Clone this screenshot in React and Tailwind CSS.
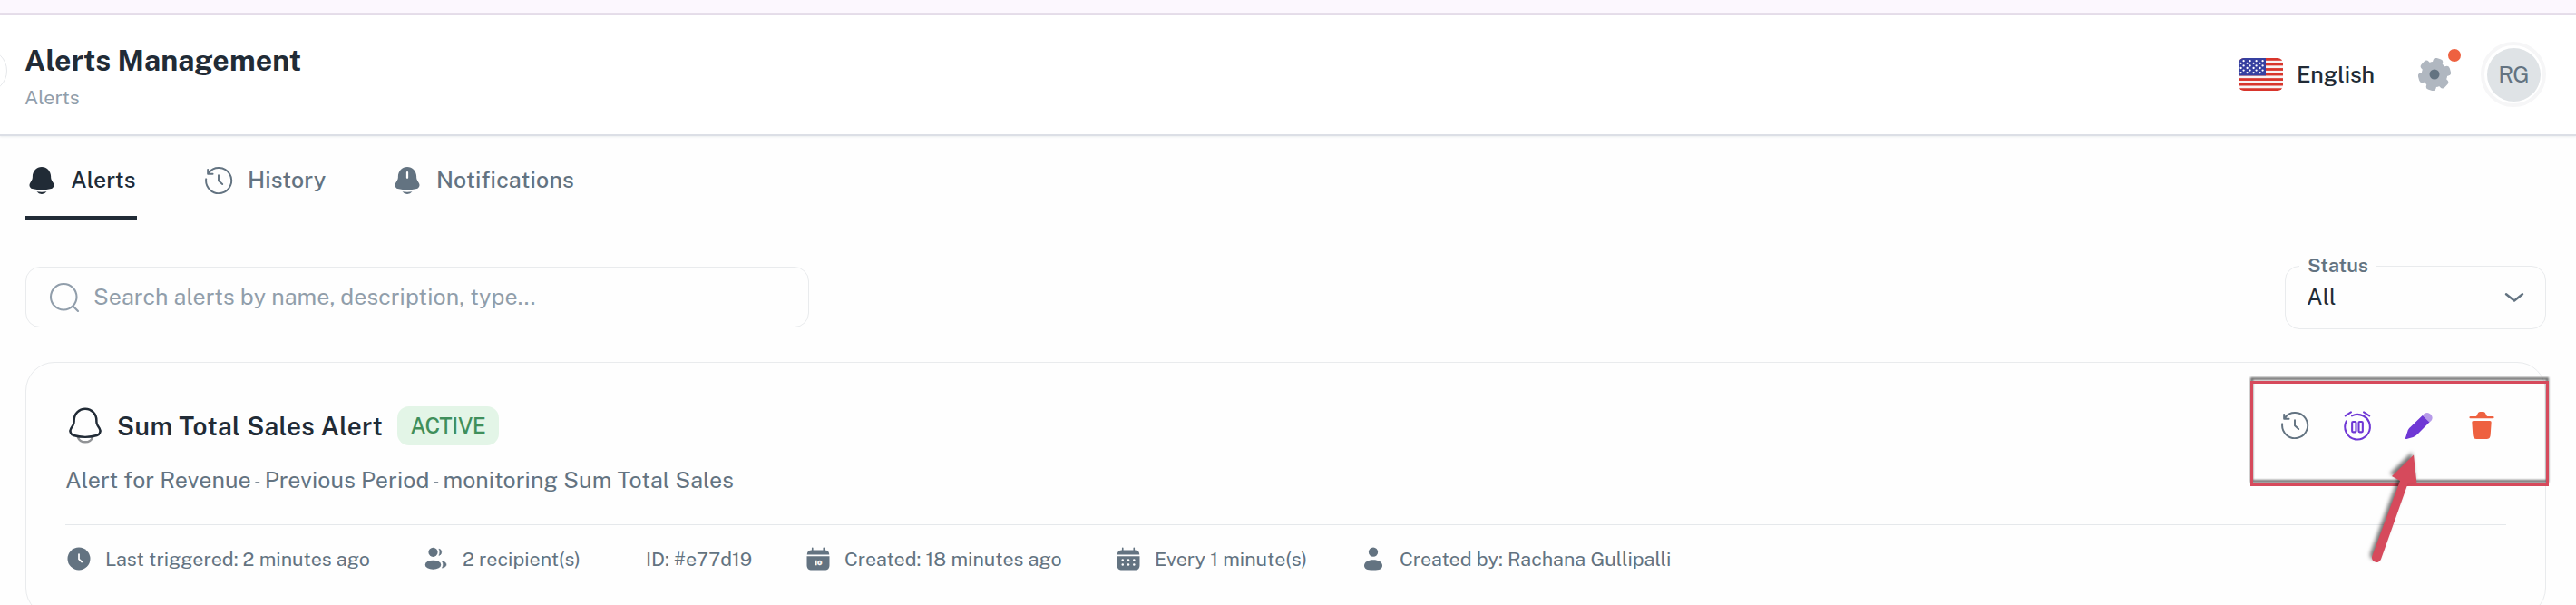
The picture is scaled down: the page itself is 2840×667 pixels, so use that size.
import { clsx } from 'clsx';

function BellIcon({ alert = false }) {
  return (
    <svg viewBox="0 0 24 24" className="size-9 shrink-0" fill="currentColor">
      <path d="M18.75 9v.704c0 .845.24 1.671.692 2.374l1.108 1.723c1.011 1.574.239 3.713-1.52 4.21a25.8 25.8 0 0 1-14.06 0c-1.759-.497-2.531-2.636-1.52-4.21l1.108-1.723a4.4 4.4 0 0 0 .693-2.374V9c0-3.866 3.022-7 6.749-7s6.75 3.134 6.75 7" />
      <path d="M8.352 20.242A4.63 4.63 0 0 0 12 22a4.63 4.63 0 0 0 3.648-1.758a27.2 27.2 0 0 1-7.296 0" />
      {alert && <path d="M12 6v3.9" stroke="#fff" strokeWidth="1.5" strokeLinecap="round" />}
    </svg>
  );
}

function BellOutlineIcon() {
  return (
    <svg viewBox="0 0 24 24" className="size-11 shrink-0" fill="none" stroke="currentColor" strokeWidth="1.35">
      <path d="M7.5 19c.655 1.748 2.422 3 4.5 3s3.845-1.252 4.5-3" stroke="#919396" />
      <path d="M18.75 9.71v-.705C18.75 5.136 15.726 2 12 2S5.25 5.136 5.25 9.005v.705a4.4 4.4 0 0 1-.692 2.375L3.45 13.81c-1.011 1.575-.239 3.716 1.52 4.214a25.8 25.8 0 0 0 14.06 0c1.759-.498 2.531-2.639 1.52-4.213l-1.108-1.725a4.4 4.4 0 0 1-.693-2.375Z" />
    </svg>
  );
}

function HistoryIcon() {
  return (
    <svg viewBox="0 0 24 24" className="size-9 shrink-0" fill="none" stroke="currentColor" strokeWidth="1.3" strokeLinecap="round" strokeLinejoin="round">
      <path d="M4.7 6.3A9.35 9.35 0 1 1 2.8 10.9" />
      <path d="M4.1 3.9v3.2h3.6M4.3 6.9l1.3-1.3" />
      <path d="M12 8.2v4l2.8 2.5" />
    </svg>
  );
}

function PauseAlarmIcon() {
  return (
    <svg viewBox="0 0 24 24" className="size-9 shrink-0" fill="none" stroke="currentColor" strokeWidth="1.4" strokeLinecap="round">
      <path d="M8 4.9A9.2 9.2 0 1 1 3.9 8.9" />
      <path d="M3.2 4.9l4.1-2.6M16.7 2.3l4.1 2.6" />
      <rect x="8.1" y="9.3" width="2.9" height="7.6" rx="0.7" />
      <rect x="13" y="9.3" width="2.9" height="7.6" rx="0.7" />
    </svg>
  );
}

function PencilIcon() {
  return (
    <svg viewBox="0 0 24 24" className="size-9 shrink-0">
      <path fill="#b79be9" d="M14.5 4.7 15.8 3.4a3.7 3.7 0 0 1 5.2 5.1L19.5 9.9Z" />
      <path fill="currentColor" d="M14.5 4.7 19.6 9.7 11.2 18.2C9.8 19.6 9 20.1 7.6 20.6L2.8 22c-.6.1-1-.2-.8-.8L3.5 16.5c.4-1.3.9-2.1 2-3.1Z" />
    </svg>
  );
}

function TrashIcon() {
  return (
    <svg viewBox="0 0 24 24" className="size-9 shrink-0" fill="currentColor">
      <path d="M3.7 5.4h3.6c.6 0 1-.3 1.3-.9C9.1 3 9.6 2 11 2h2c1.4 0 1.9 1 2.4 2.5.3.6.7.9 1.3.9h3.6c1 0 1 1.5 0 1.5H3.7c-1 0-1-1.5 0-1.5Z" />
      <path d="M6 8.7h12c.8 0 1.2.5 1.1 1.300l-.6 8.600c-.2 2.400-.9 3.400-3.400 3.400H8.900c-2.500 0-3.200-1-3.400-3.400L4.900 10c-.1-.8.3-1.300 1.100-1.300Z" />
    </svg>
  );
}

function SearchIcon() {
  return (
    <svg viewBox="0 0 24 24" className="size-9 shrink-0" fill="none" stroke="currentColor" strokeWidth="1.4" strokeLinecap="round">
      <circle cx="11.5" cy="11.5" r="9.5" />
      <path d="M18.5 18.5 22 22" />
    </svg>
  );
}

function GearIcon() {
  return (
    <svg viewBox="-18 -18 36 36" className="size-9 shrink-0">
      <g fill="#b0b7c0" transform="rotate(15)">
        <circle r="14.2" />
        <rect x="-5.5" y="-18" width="11" height="36" rx="3.5" />
        <rect x="-5.5" y="-18" width="11" height="36" rx="3.5" transform="rotate(60)" />
        <rect x="-5.5" y="-18" width="11" height="36" rx="3.5" transform="rotate(120)" />
      </g>
      <circle r="5.5" fill="#637381" />
    </svg>
  );
}

const STAR_ROWS = [0, 1, 2, 3, 4, 5];

function FlagIcon() {
  return (
    <svg viewBox="0 0 49 36" className="h-9 w-[49px] shrink-0 rounded-md">
      <rect width="49" height="36" fill="#f7f3f3" />
      {[0, 1, 2, 3, 4, 5, 6].map((i) => (
        <rect key={i} y={i * 5.54} width="49" height="2.8" fill="#d8352c" />
      ))}
      <rect width="30" height="19.4" fill="#3640a0" />
      {STAR_ROWS.map((row) =>
        [0, 1, 2, 3].map((col) => (
          <circle
            key={`${row}-${col}`}
            cx={(row % 2 ? 2.6 : 5.6) + col * 7}
            cy={3.2 + row * 2.6}
            r="1.15"
            fill="#fff"
          />
        ))
      )}
    </svg>
  );
}

function ClockIcon() {
  return (
    <svg viewBox="0 0 24 24" className="size-[30px] shrink-0">
      <circle cx="12" cy="12" r="10" fill="currentColor" />
      <path d="M12 8v4.3l2.6 2.5" fill="none" stroke="#fff" strokeWidth="1.4" strokeLinecap="round" />
    </svg>
  );
}

function UsersIcon() {
  return (
    <svg viewBox="0 0 24 24" className="size-[30px] shrink-0" fill="currentColor">
      <circle cx="9.2" cy="6.2" r="4.1" />
      <ellipse cx="9.2" cy="17.3" rx="7" ry="4" />
      <path d="M14.3 3.2a3.1 3.1 0 0 1 0 6c1-1.9 1-4.1 0-6Z" stroke="currentColor" strokeWidth=".4" />
      <path d="M17.1 14.2c5 .6 5 5.3 0 5.9 1.2-1.8 1.2-4.1 0-5.9Z" stroke="currentColor" strokeWidth=".4" />
    </svg>
  );
}

function CalendarIcon({ date = false }) {
  return (
    <svg viewBox="0 0 24 24" className="size-[30px] shrink-0" fill="currentColor">
      <path d="M7 2.6v3M17 2.6v3" stroke="currentColor" strokeWidth="1.3" strokeLinecap="round" />
      <path d="M2.2 8.3C2.4 5.2 4 4.3 7 4.3h10c3 0 4.6.9 4.8 4Z" />
      <path d="M2 9.7h20v7.5c0 3.5-1.3 4.8-4.5 4.8h-11C3.3 22 2 20.7 2 17.2Z" />
      {date ? (
        <text x="12" y="17.9" fill="#fff" stroke="#fff" strokeWidth=".3" fontSize="6.4" fontWeight="800" textAnchor="middle">10</text>
      ) : (
        [13.2, 17.2].map((cy) =>
          [7, 12, 17].map((cx) => <circle key={`${cx}-${cy}`} cx={cx} cy={cy} r="1" fill="#fff" />)
        )
      )}
    </svg>
  );
}

function UserIcon() {
  return (
    <svg viewBox="0 0 24 24" className="size-[30px] shrink-0" fill="currentColor">
      <circle cx="12" cy="6.1" r="4.1" />
      <path d="M12 13c4.600 0 8 2 8 5s-2.300 4-8 4-8-1-8-4 3.400-5 8-5Z" />
    </svg>
  );
}

const tabs = [
  { label: 'Alerts', icon: <BellIcon />, active: true, width: 'w-[73px]' },
  { label: 'History', icon: <HistoryIcon />, width: 'w-[86px] tracking-[0.1px]' },
  { label: 'Notifications', icon: <BellIcon alert />, width: 'w-[153px] tracking-[0.2px]' }
];

const meta = [
  { text: 'Last triggered: 2 minutes ago', icon: <ClockIcon />, width: 'w-[292px]' },
  { text: '2 recipient(s)', icon: <UsersIcon />, width: 'w-[130px]' },
  { text: 'ID: #e77d19', icon: <span />, width: 'w-[117px]' },
  { text: 'Created: 18 minutes ago', icon: <CalendarIcon date />, width: 'w-[240px]' },
  { text: 'Every 1 minute(s)', icon: <CalendarIcon />, width: 'w-[168px]' },
  { text: 'Created by: Rachana Gullipalli', icon: <UserIcon />, width: 'w-[300px]' }
];

function Header() {
  return (
    <header className="relative flex h-[134px] items-center justify-between border-b-2 border-[#dcdfe6] bg-white pl-[27px] pr-[33px] shadow-[0_1px_2px_rgba(145,158,171,0.16)]">
      <span className="absolute -left-10 top-[38px] size-12 rounded-full border border-[#e6e8eb]" />
      <div className="pt-1.5">
        <h1 className="text-[32px] font-bold leading-10 tracking-[0.15px]">Alerts Management</h1>
        <p className="mt-[5px] text-[21.5px] leading-8 text-[#919eab]">Alerts</p>
      </div>
      <div className="flex items-center">
        <FlagIcon />
        <span className="ml-[15px] w-[86px] text-[25px] font-medium leading-9 tracking-[-0.1px]">English</span>
        <button className="relative ml-12" aria-label="Settings">
          <GearIcon />
          <span className="absolute left-[33px] top-[-10px] size-3.5 rounded-full bg-[#ee6140]" />
        </button>
        <div className="ml-[33px] flex size-[72px] items-center justify-center rounded-full border-4 border-[#f6f6f7]">
          <span className="flex size-[59px] items-center justify-center rounded-full bg-[#dfe3e6] text-[25px] leading-9 tracking-[-0.8px] text-[#637381]">
            RG
          </span>
        </div>
      </div>
    </header>
  );
}

function Tabs() {
  return (
    <nav className="flex h-[92px] gap-[72px]">
      {tabs.map((tab) => (
        <button
          key={tab.label}
          className={clsx(
            'flex items-center gap-3.5 border-b-4 pt-2.5 text-[25px] font-medium leading-9',
            tab.active ? 'border-[#212b36]' : 'border-transparent text-[#637381]'
          )}
        >
          {tab.icon}
          <span className={clsx('-mt-0.5 whitespace-nowrap text-left', tab.width)}>{tab.label}</span>
        </button>
      ))}
    </nav>
  );
}

function Filters() {
  return (
    <div className="mt-[51px] flex items-start justify-between">
      <div className="mt-px flex h-[67px] w-[864px] items-center gap-3.5 rounded-2xl border border-[#e9ebed] pl-6 text-[25px] text-[#919eab]">
        <SearchIcon />
        <span className="whitespace-nowrap tracking-[0.08px]">Search alerts by name, description, type...</span>
      </div>
      <div className="relative flex h-[70px] w-[288px] items-center justify-between rounded-2xl border border-[#e9ebed] pl-[23px] pr-[23px] text-[25px]">
        <span className="absolute left-[15px] top-[-17px] w-[84px] bg-[#fefefe] pl-[9px] text-[21.5px] font-semibold leading-8 text-[#637381]">
          Status
        </span>
        <span>All</span>
        <svg viewBox="0 0 22 12" className="h-3 w-[22px]" fill="none" stroke="#637381" strokeWidth="2.5" strokeLinecap="round" strokeLinejoin="round">
          <path d="M2 2.3 11 9.5 20 2.3" />
        </svg>
      </div>
    </div>
  );
}

function AlertCard() {
  return (
    <article className="mt-9 h-[281px] rounded-[32px] border border-[#e9ebed] px-[43px] pt-[47px]">
      <div className="flex h-11 items-center">
        <BellOutlineIcon />
        <h2 className="ml-[13px] mt-px w-[309px] whitespace-nowrap text-[28px] font-semibold leading-9 tracking-[0.35px]">Sum Total Sales Alert</h2>
        <span className="flex h-[43px] w-28 items-center justify-center rounded-[13px] bg-[#e3f5e7] pb-px text-[24px] font-medium tracking-[-0.4px] text-[#3f8f5b]">
          ACTIVE
        </span>
        <div className="ml-auto mr-[9px] flex gap-[32.6px]">
          <button className="text-[#637381]" aria-label="History"><HistoryIcon /></button>
          <button className="text-[#6f38d5]" aria-label="Pause"><PauseAlarmIcon /></button>
          <button className="text-[#6f38d5]" aria-label="Edit"><PencilIcon /></button>
          <button className="text-[#ee6140]" aria-label="Delete"><TrashIcon /></button>
        </div>
      </div>
      <p className="mt-5 flex text-[25px] leading-9 text-[#637381]">
        <span className="tracking-[0.05px]">Alert for Revenue</span>
        <span className="flex w-[15px] justify-center"><span className="scale-x-75">-</span></span>
        <span className="tracking-[0.1px]">Previous Period</span>
        <span className="flex w-[15px] justify-center"><span className="scale-x-75">-</span></span>
        <span className="tracking-[0.05px]">monitoring Sum Total Sales</span>
      </p>
      <div className="mt-[31px] flex gap-[58px] border-t border-[#e5e8eb] pt-[19px] text-[21.5px] leading-9 text-[#637381]">
        {meta.map((item) => (
          <div key={item.text} className="flex h-9 items-center gap-3.5">
            {item.icon}
            <span className={clsx('mt-px whitespace-nowrap', item.width)}>{item.text}</span>
          </div>
        ))}
      </div>
    </article>
  );
}

// Callout box and arrow pointing at the edit action
function Callout() {
  return (
    <>
      <div className="absolute left-[2481px] top-[420px] h-[116px] w-[329px] border-[3px] border-[#d64a5c] [filter:drop-shadow(0_-4px_1px_rgba(0,0,0,0.55))]" />
      <svg viewBox="0 0 60 140" className="absolute left-[2610px] top-[490px] h-[140px] w-[60px] [filter:drop-shadow(-2px_-3px_2px_rgba(0,0,0,0.55))]" fill="#d64a5c">
        <path d="M51 11.5 54.5 43 44.5 43.5 15 126.5a5 5 0 0 1-9.7-3.5L36 40 27 35Z" />
      </svg>
    </>
  );
}

export default function App() {
  return (
    <div className="relative h-[667px] w-[2840px] overflow-hidden bg-[#fefefe] font-['Public_Sans','Inter',sans-serif] text-[#212b36]">
      <div className="h-4 border-b-2 border-[#e6deea] bg-[#fcf7fe]" />
      <Header />
      <main className="pl-7 pr-[33px]">
        <Tabs />
        <Filters />
        <AlertCard />
      </main>
      <Callout />
    </div>
  );
}
